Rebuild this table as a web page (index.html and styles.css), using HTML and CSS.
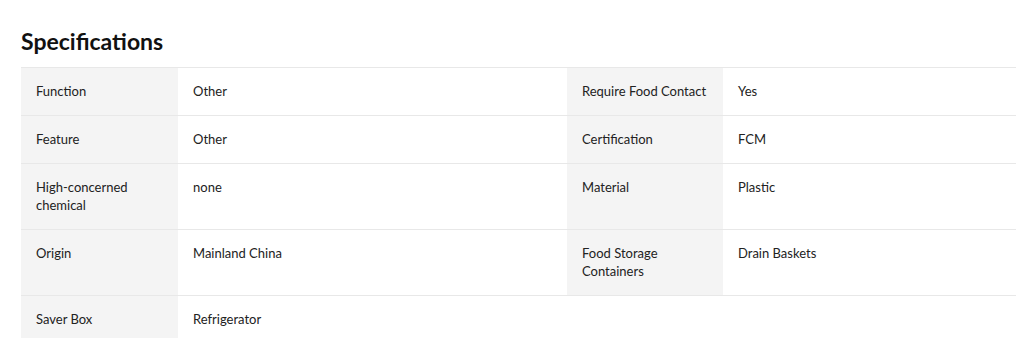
FILE: index.html
```html
<!DOCTYPE html>
<html lang="en">

<head>
    <meta charset="UTF-8">
    <meta name="viewport" content="width=device-width, initial-scale=1.0">
    <title>Specifications</title>
    <link rel="stylesheet" href="styles.css">
</head>

<body>
    <div class="specs">
        <h2 class="specs-title">Specifications</h2>
        <table class="specs-table">
            <colgroup>
                <col class="col-label">
                <col class="col-value">
                <col class="col-label2">
                <col>
            </colgroup>
            <tr>
                <th>Function</th>
                <td>Other</td>
                <th>Require Food Contact</th>
                <td>Yes</td>
            </tr>
            <tr>
                <th>Feature</th>
                <td>Other</td>
                <th>Certification</th>
                <td>FCM</td>
            </tr>
            <tr>
                <th>High-concerned chemical</th>
                <td>none</td>
                <th>Material</th>
                <td>Plastic</td>
            </tr>
            <tr>
                <th>Origin</th>
                <td>Mainland China</td>
                <th>Food Storage Containers</th>
                <td>Drain Baskets</td>
            </tr>
            <tr>
                <th>Saver Box</th>
                <td>Refrigerator</td>
                <td></td>
                <td></td>
            </tr>
        </table>
    </div>
</body>

</html>
```

FILE: styles.css
```css
* {
    margin: 0;
    padding: 0;
    box-sizing: border-box;
}

body {
    background-color: #fff;
    font-family: Lato, "Liberation Sans", sans-serif;
    color: #222;
}

.specs {
    padding: 28px 0 0 21px;
}

.specs-title {
    font-size: 23px;
    line-height: 27px;
    font-weight: 700;
    color: #111;
    margin-bottom: 12px;
}

.specs-table {
    width: 100%;
    table-layout: fixed;
    border-collapse: collapse;
    border-top: 1px solid #e8e8e8;
}

.col-label {
    width: 157px;
}

.col-value {
    width: 389px;
}

.col-label2 {
    width: 156px;
}

.specs-table th,
.specs-table td {
    font-size: 13px;
    line-height: 18px;
    font-weight: 400;
    text-align: left;
    vertical-align: top;
    padding: 14px 15px 15px;
    border-bottom: 1px solid #e8e8e8;
}

.specs-table th {
    background-color: #f4f4f4;
    padding-right: 12px;
}

/* 名称列换行宽度 */
.specs-table tr:nth-child(3) th:first-child {
    padding-right: 40px;
}

.specs-table tr:nth-child(4) th:nth-child(3) {
    padding-right: 40px;
}
```
